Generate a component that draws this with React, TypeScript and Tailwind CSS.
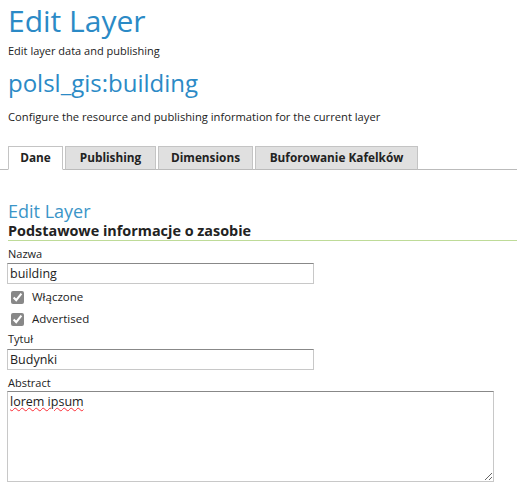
import { useState } from "react";

const font = "font-['Open_Sans',sans-serif]";

const tabs = [
    { name: "Dane", w: "w-[55px]" },
    { name: "Publishing", w: "w-[91px]" },
    { name: "Dimensions", w: "w-[95px]" },
    { name: "Buforowanie Kafelków", w: "w-[163px]" },
];

export default function App() {
    const [tab, setTab] = useState("Dane");

    return (
        <div className={`${font} bg-white text-[#222] w-[517px] h-[493px] overflow-hidden pl-2`}>
            {/* Page header */}
            <h1 className="text-[#2b8ac6] text-[30px] leading-[41px]">Edit Layer</h1>
            <p className="text-[11px] mt-[3px] leading-[14px]">Edit layer data and publishing</p>
            <h2 className="text-[#2b8ac6] text-[24px] leading-[30px] mt-[10px]">polsl_gis:building</h2>
            <p className="text-[11.2px] mt-[12px] leading-[14px]">Configure the resource and publishing information for the current layer</p>

            {/* Tabs */}
            <div className="flex items-end mt-[22px] -ml-2 border-b border-[#bbb] pl-2">
                {tabs.map((t) => {
                    const active = tab === t.name;
                    return (
                        <button
                            key={t.name}
                            onClick={() => setTab(t.name)}
                            className={`${t.w} h-[24px] mr-[2px] text-[11.8px] font-bold border border-[#c4c4c4] -mb-[1px] ${active ? "bg-white border-b-white" : "bg-[#e0e0e0] border-b-[#bbb]"}`}
                        >
                            {t.name}
                        </button>
                    );
                })}
            </div>

            {/* Section */}
            <h3 className="text-[#3b95c8] text-[18px] leading-[24px] mt-[29px]">Edit Layer</h3>
            <div className="border-b border-[#bedb98] pb-[1px]">
                <h4 className="font-bold text-[14.4px] leading-[16px]">Podstawowe informacje o zasobie</h4>
            </div>

            <form className="text-[11px]">
                <label className="block mt-[6px] leading-[14px]">Nazwa</label>
                <input
                    defaultValue="building"
                    className="block -ml-[1px] mt-[2px] w-[307px] h-[21px] px-[2px] text-[12.5px] border border-[#c8c8c8] border-t-[#888] outline-none"
                />
                <label className="flex items-center gap-[8px] mt-[2px] h-[22px] pl-[3px] text-[11.5px]">
                    <input type="checkbox" defaultChecked className="w-[13px] h-[13px] accent-[#888]" />
                    Włączone
                </label>
                <label className="flex items-center gap-[8px] h-[22px] pl-[3px] text-[11.5px]">
                    <input type="checkbox" defaultChecked className="w-[13px] h-[13px] accent-[#888]" />
                    Advertised
                </label>
                <label className="block mt-[2px] leading-[14px]">Tytuł</label>
                <input
                    defaultValue="Budynki"
                    className="block -ml-[1px] mt-[3px] w-[307px] h-[21px] px-[2px] text-[12.5px] border border-[#c8c8c8] border-t-[#888] outline-none"
                />
                <label className="block mt-[6px] leading-[14px]">Abstract</label>
                <textarea
                    defaultValue="lorem ipsum"
                    className="block -ml-[1px] mt-[1px] w-[487px] h-[91px] px-[2px] py-[1px] text-[12.5px] border border-[#c8c8c8] border-t-[#888] outline-none underline decoration-wavy decoration-red-500 decoration-[1px] resize"
                />
            </form>
        </div>
    );
}
